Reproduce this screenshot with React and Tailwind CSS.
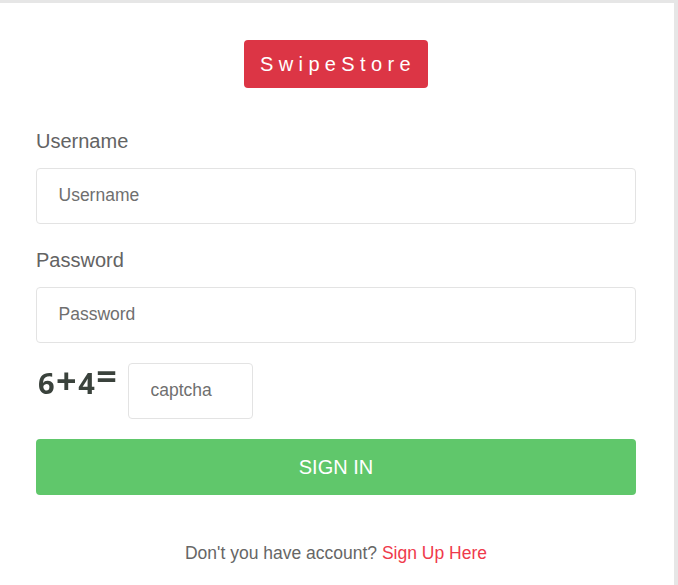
const fieldClass =
  "h-14 w-full rounded border border-[#e3e3e3] bg-white pr-[22px] pb-[2px] pl-[21.5px] text-[17.5px] text-[#495057] placeholder:text-[#6f6f6f] outline-none";

export default function App() {
  return (
    <div className="h-[585px] overflow-hidden bg-[#e6e6e6] pt-[3px] pr-1 font-['Liberation_Sans',Arial,sans-serif]">
      <div className="h-full bg-white pt-[37px] pr-[38px] pl-9">
        <div className="flex justify-center">
          <div className="flex h-12 w-[184px] items-center justify-center rounded bg-[#dc3545] pl-[4px] text-xl tracking-[5.35px] text-white">
            SwipeStore
          </div>
        </div>

        <form className="mt-[39px]">
          <label className="mb-[13px] block text-xl leading-[28px] text-[#636363]">Username</label>
          <input className={fieldClass} placeholder="Username" />

          <label className="mt-[22px] mb-[13px] block text-xl leading-[28px] text-[#636363]">Password</label>
          <input className={fieldClass} placeholder="Password" type="password" />

          <div className="mt-5 flex items-start">
            <div className="w-[92px] pl-[2px] font-['Open_Sans',sans-serif] text-[29px] leading-[36px] font-bold tracking-[1.5px] text-[#3a423c] blur-[0.6px]">
              6<span className="text-[36px] leading-[36px]">+</span>4
              <span className="relative -top-[5px] text-[36px] leading-[36px]">=</span>
            </div>
            <input className={`${fieldClass} !w-[125px]`} placeholder="captcha" />
          </div>

          <button
            type="button"
            className="mt-5 flex h-14 w-full items-center justify-center rounded bg-[#60c76b] text-xl text-white"
          >
            SIGN IN
          </button>
        </form>

        <p className="mt-[47px] text-center text-[17.5px] leading-[22px] text-[#666666]">
          Don't you have account? <span className="text-[#ef3a4b]">Sign Up Here</span>
        </p>
      </div>
    </div>
  );
}
